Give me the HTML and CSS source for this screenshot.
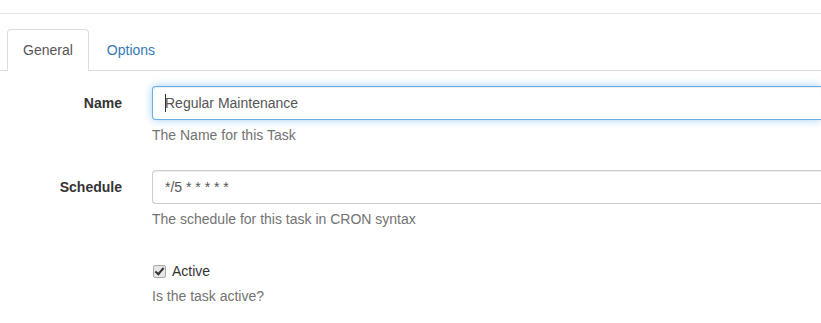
FILE: index.html
```html
<!DOCTYPE html>
<html lang="en">
<head>
    <title>Edit Task</title>
    <meta name="viewport" content="width=device-width, initial-scale=1">
    <link rel="stylesheet" href="styles.css">
</head>
<body>
    <div class="topbar"></div>
    <ul class="tabs">
        <li class="active"><a href="#general">General</a></li>
        <li><a href="#options">Options</a></li>
    </ul>
    <div class="tab-content">
        <form class="task-form" action="">
            <div class="form-group">
                <label class="control-label" for="name">Name</label>
                <div class="field">
                    <div class="input-wrap">
                        <input class="form-control focused" id="name" type="text" value="Regular Maintenance">
                        <span class="caret"></span>
                    </div>
                    <span class="help-block">The Name for this Task</span>
                </div>
            </div>
            <div class="form-group">
                <label class="control-label" for="schedule">Schedule</label>
                <div class="field">
                    <input class="form-control" id="schedule" type="text" value="*/5 * * * * *">
                    <span class="help-block">The schedule for this task in CRON syntax</span>
                </div>
            </div>
            <div class="form-group">
                <span></span>
                <div class="field">
                    <div class="checkbox">
                        <label><input type="checkbox" checked> Active</label>
                    </div>
                    <span class="help-block">Is the task active?</span>
                </div>
            </div>
        </form>
    </div>
</body>
</html>
```
FILE: styles.css
```css
html, body {
    margin: 0;
    overflow: hidden;
}
body {
    font-family: "Liberation Sans", Arial, sans-serif;
    font-size: 14px;
    line-height: 20px;
    color: #333;
    background: #fff;
}
.topbar {
    height: 13px;
    border-bottom: 1px solid #e5e5e5;
}
.tabs {
    list-style: none;
    margin: 15px 0 0 0;
    padding: 0 0 0 7px;
    display: flex;
    border-bottom: 1px solid #ddd;
}
.tabs li {
    margin-bottom: -1px;
}
.tabs a {
    display: block;
    padding: 10px 15px;
    margin-right: 2px;
    line-height: 20px;
    border: 1px solid transparent;
    border-radius: 4px 4px 0 0;
    color: #337ab7;
    text-decoration: none;
}
.tabs .active a {
    color: #555;
    background: #fff;
    border-color: #ddd;
    border-bottom-color: transparent;
}
.tab-content {
    padding-top: 15px;
}
.form-group {
    display: grid;
    grid-template-columns: 122px 1fr;
    column-gap: 30px;
    margin-bottom: 15px;
}
.control-label {
    text-align: right;
    font-weight: bold;
    padding-top: 7px;
}
.input-wrap {
    position: relative;
}
.form-control {
    display: block;
    box-sizing: border-box;
    width: 100%;
    height: 34px;
    padding: 6px 12px;
    font-family: inherit;
    font-size: 14px;
    line-height: 20px;
    color: #555;
    background: #fff;
    border: 1px solid #ccc;
    border-right-width: 0;
    border-radius: 4px 0 0 4px;
    box-shadow: inset 0 1px 1px rgba(0,0,0,.075);
    outline: none;
}
.form-control.focused {
    border-color: #66afe9;
    box-shadow: inset 0 1px 1px rgba(0,0,0,.075), 0 0 8px rgba(102,175,233,.6);
}
.caret {
    position: absolute;
    left: 13px;
    top: 8px;
    width: 1px;
    height: 18px;
    background: #333;
}
.help-block {
    display: block;
    margin: 5px 0 10px;
    color: #737373;
}
.checkbox {
    padding-top: 7px;
    min-height: 27px;
    box-sizing: border-box;
}
.checkbox label {
    display: flex;
    align-items: center;
    cursor: pointer;
}
.checkbox input {
    appearance: none;
    -webkit-appearance: none;
    box-sizing: border-box;
    width: 13px;
    height: 13px;
    margin: 0 6px 0 1px;
    border: 1px solid #a9a9a9;
    border-radius: 2px;
    background: #e6e6e6;
    position: relative;
}
.checkbox input:checked::after {
    content: "";
    position: absolute;
    left: 3px;
    top: 0px;
    width: 3px;
    height: 7px;
    border: solid #333;
    border-width: 0 2px 2px 0;
    transform: rotate(40deg);
}
```
